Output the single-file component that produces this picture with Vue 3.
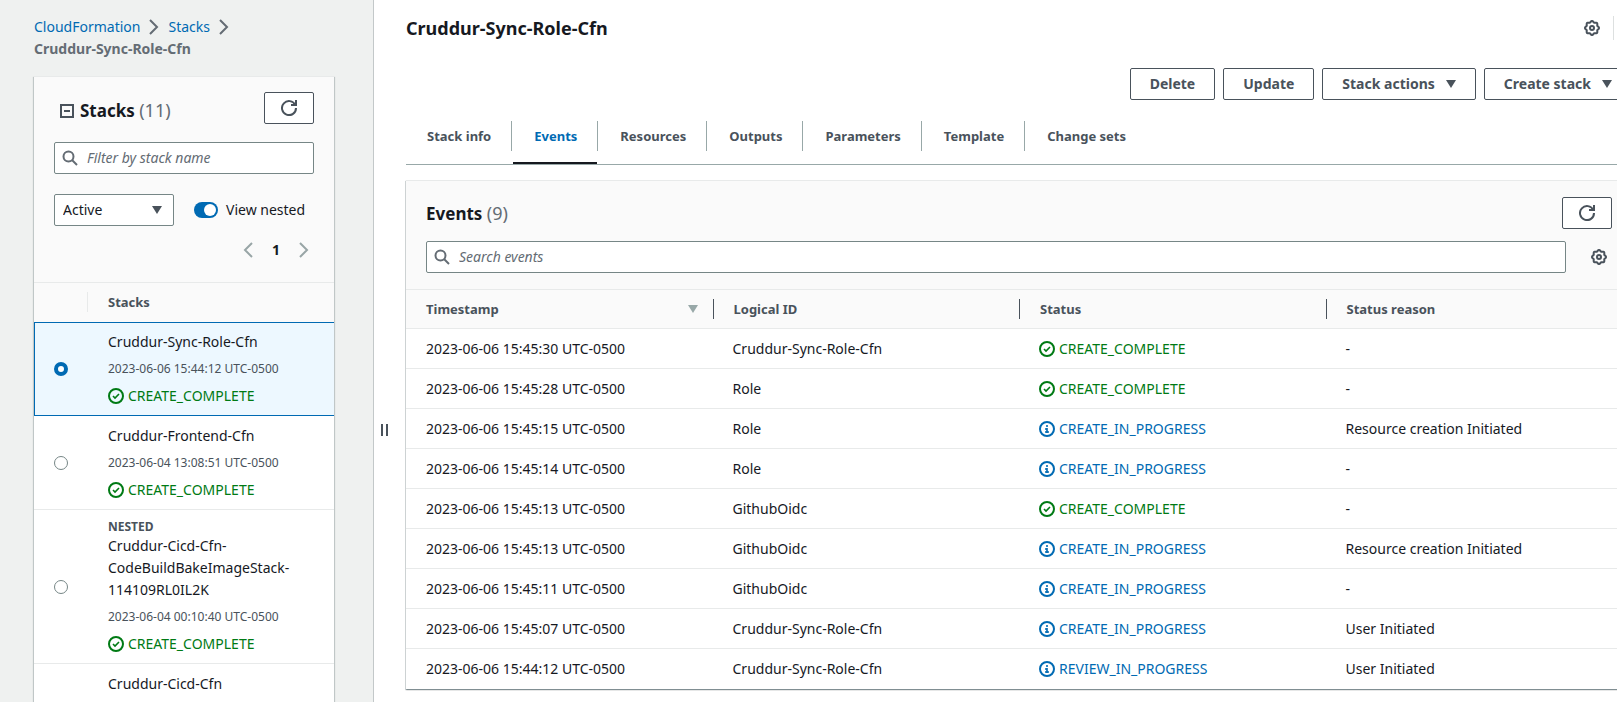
<script setup>
import { ref } from 'vue'

const tabs = ['Stack info', 'Events', 'Resources', 'Outputs', 'Parameters', 'Template', 'Change sets']
const activeTab = ref('Events')
const selected = ref(0)
const nestedOn = ref(true)

const stacks = [
  { name: ['Cruddur-Sync-Role-Cfn'], time: '2023-06-06 15:44:12 UTC-0500', status: 'CREATE_COMPLETE' },
  { name: ['Cruddur-Frontend-Cfn'], time: '2023-06-04 13:08:51 UTC-0500', status: 'CREATE_COMPLETE' },
  {
    nested: true,
    name: ['Cruddur-Cicd-Cfn-', 'CodeBuildBakeImageStack-', '114109RL0IL2K'],
    time: '2023-06-04 00:10:40 UTC-0500',
    status: 'CREATE_COMPLETE',
  },
  { name: ['Cruddur-Cicd-Cfn'] },
]

const events = [
  ['15:45:30', 'Cruddur-Sync-Role-Cfn', 'CREATE_COMPLETE', '-'],
  ['15:45:28', 'Role', 'CREATE_COMPLETE', '-'],
  ['15:45:15', 'Role', 'CREATE_IN_PROGRESS', 'Resource creation Initiated'],
  ['15:45:14', 'Role', 'CREATE_IN_PROGRESS', '-'],
  ['15:45:13', 'GithubOidc', 'CREATE_COMPLETE', '-'],
  ['15:45:13', 'GithubOidc', 'CREATE_IN_PROGRESS', 'Resource creation Initiated'],
  ['15:45:11', 'GithubOidc', 'CREATE_IN_PROGRESS', '-'],
  ['15:45:07', 'Cruddur-Sync-Role-Cfn', 'CREATE_IN_PROGRESS', 'User Initiated'],
  ['15:44:12', 'Cruddur-Sync-Role-Cfn', 'REVIEW_IN_PROGRESS', 'User Initiated'],
].map(([time, id, status, reason]) => ({ time: `2023-06-06 ${time} UTC-0500`, id, status, reason }))

const done = (status) => status.endsWith('COMPLETE')

// Eight-lobed outline of the settings cog.
const cog =
  'M' +
  Array.from({ length: 64 }, (_, i) => {
    const a = (i / 64) * Math.PI * 2
    const r = 6.4 + 0.65 * Math.cos(8 * a)
    return `${(8 + r * Math.cos(a)).toFixed(2)} ${(8 + r * Math.sin(a)).toFixed(2)}`
  }).join('L') +
  'Z'
</script>

<template>
  <div class="app">
    <aside class="side">
      <nav class="crumbs" aria-label="Breadcrumbs">
        <a href="#">CloudFormation</a>
        <svg class="icon" viewBox="0 0 16 16"><path d="M4 1l7 7-7 7" /></svg>
        <a href="#">Stacks</a>
        <svg class="icon" viewBox="0 0 16 16"><path d="M4 1l7 7-7 7" /></svg>
        <span class="current">Cruddur-Sync-Role-Cfn</span>
      </nav>

      <section class="panel">
        <div class="stack-head">
          <div class="title-row">
            <h2>
              <svg class="collapse" viewBox="0 0 14 14"><path d="M1 1h12v12H1zM4 7h6" /></svg>
              <span>Stacks <span class="count">(11)</span></span>
            </h2>
            <button class="btn refresh" aria-label="Refresh stacks">
              <svg class="icon" viewBox="0 0 16 16"><path d="M10 5h5V0M15 8a7 7 0 1 1-.7-3" /></svg>
            </button>
          </div>
          <label class="search">
            <svg class="icon" viewBox="0 0 16 16"><circle cx="6.5" cy="6.5" r="5" /><path d="M10 10l5 5" /></svg>
            <input type="text" placeholder="Filter by stack name" aria-label="Filter by stack name" />
          </label>
          <div class="filters">
            <div class="select">
              <select aria-label="Stack status"><option>Active</option></select>
              <svg class="caret" viewBox="0 0 10 8"><path d="M0 0h10L5 8z" /></svg>
            </div>
            <label class="switch">
              <input v-model="nestedOn" type="checkbox" role="switch" />
              <span>View nested</span>
            </label>
          </div>
          <div class="pages">
            <button aria-label="Previous page"><svg class="icon" viewBox="0 0 16 16"><path d="M12 1L5 8l7 7" /></svg></button>
            <span>1</span>
            <button aria-label="Next page"><svg class="icon" viewBox="0 0 16 16"><path d="M4 1l7 7-7 7" /></svg></button>
          </div>
        </div>

        <table class="stacks">
          <thead>
            <tr>
              <th class="pick"><div class="sep"></div></th>
              <th>Stacks</th>
            </tr>
          </thead>
          <tbody>
            <tr v-for="(s, i) in stacks" :key="i" :class="{ on: selected === i }">
              <td class="pick">
                <input v-model="selected" type="radio" name="stack" :value="i" :aria-label="s.name.join('')" />
              </td>
              <td class="info">
                <div v-if="s.nested" class="nested">NESTED</div>
                <div v-for="line in s.name" :key="line">{{ line }}</div>
                <div v-if="s.time" class="time">{{ s.time }}</div>
                <div v-if="s.status" class="status ok">
                  <svg class="icon" viewBox="0 0 16 16"><circle cx="8" cy="8" r="7" /><path d="M5 8l2 2 4-4" /></svg>
                  <span>{{ s.status }}</span>
                </div>
              </td>
            </tr>
          </tbody>
        </table>
      </section>
    </aside>

    <div class="splitter">
      <svg viewBox="0 0 8 12" aria-label="Resize panels"><path d="M1 0v12M6 0v12" /></svg>
    </div>

    <main class="main">
      <div class="content">
        <header class="top">
          <h1>Cruddur-Sync-Role-Cfn</h1>
          <button class="cog" aria-label="Preferences">
            <svg class="icon" viewBox="0 0 16 16"><path :d="cog" /><circle cx="8" cy="8" r="2" /></svg>
          </button>
          <span class="rule"></span>
        </header>

        <div class="actions">
          <button class="btn">Delete</button>
          <button class="btn">Update</button>
          <button class="btn">Stack actions <svg class="caret" viewBox="0 0 10 8"><path d="M0 0h10L5 8z" /></svg></button>
          <button class="btn">Create stack <svg class="caret" viewBox="0 0 10 8"><path d="M0 0h10L5 8z" /></svg></button>
        </div>

        <ul class="tabs" role="tablist">
          <li v-for="t in tabs" :key="t" role="presentation">
            <button role="tab" :aria-selected="activeTab === t" :class="{ active: activeTab === t }" @click="activeTab = t">{{ t }}</button>
          </li>
        </ul>

        <section class="panel events">
          <div class="event-head">
            <div class="title-row">
              <h2>Events <span class="count">(9)</span></h2>
              <button class="btn refresh" aria-label="Refresh events">
                <svg class="icon" viewBox="0 0 16 16"><path d="M10 5h5V0M15 8a7 7 0 1 1-.7-3" /></svg>
              </button>
            </div>
            <div class="search-row">
              <label class="search">
                <svg class="icon" viewBox="0 0 16 16"><circle cx="6.5" cy="6.5" r="5" /><path d="M10 10l5 5" /></svg>
                <input type="text" placeholder="Search events" aria-label="Search events" />
              </label>
              <button class="cog" aria-label="Table preferences">
                <svg class="icon" viewBox="0 0 16 16"><path :d="cog" /><circle cx="8" cy="8" r="2" /></svg>
              </button>
            </div>
          </div>

          <table class="grid">
            <thead>
              <tr>
                <th>
                  <div class="sort">Timestamp <svg class="caret" viewBox="0 0 10 8"><path d="M0 0h10L5 8z" /></svg></div>
                </th>
                <th><div class="sep">Logical ID</div></th>
                <th><div class="sep">Status</div></th>
                <th><div class="sep">Status reason</div></th>
              </tr>
            </thead>
            <tbody>
              <tr v-for="(e, i) in events" :key="i">
                <td>{{ e.time }}</td>
                <td>{{ e.id }}</td>
                <td>
                  <div class="status" :class="done(e.status) ? 'ok' : 'busy'">
                    <svg v-if="done(e.status)" class="icon" viewBox="0 0 16 16"><circle cx="8" cy="8" r="7" /><path d="M5 8l2 2 4-4" /></svg>
                    <svg v-else class="icon" viewBox="0 0 16 16"><circle cx="8" cy="8" r="7" /><path d="M8 4v2M6 8h2M8 7v5M6 11h4" /></svg>
                    <span>{{ e.status }}</span>
                  </div>
                </td>
                <td>{{ e.reason }}</td>
              </tr>
            </tbody>
          </table>
        </section>
      </div>
    </main>
  </div>
</template>

<style>
body {
  margin: 0;
}
</style>

<style scoped>
.app {
  --ink: #16191f;
  --slate: #49525b;
  --grey: #646c74;
  --blue: #006ab3;
  --line: #e8eaea;
  display: flex;
  height: 100vh;
  overflow: hidden;
  background: #fff;
  color: var(--ink);
  font: 14px/22px "Noto Sans", "Open Sans", sans-serif;
}
* {
  box-sizing: border-box;
}
button,
input,
select {
  margin: 0;
  padding: 0;
  border: 0;
  background: none;
  color: inherit;
  font: inherit;
}
a {
  color: var(--blue);
  text-decoration: none;
}
h1,
h2 {
  margin: 0;
  font-size: 18px;
  line-height: 24px;
  font-weight: 700;
}
h2 {
  font-size: 17px;
}
.count {
  color: var(--grey);
  font-size: 18px;
  font-weight: 400;
}
.icon {
  display: block;
  flex: none;
  width: 16px;
  height: 16px;
  fill: none;
  stroke: currentColor;
  stroke-width: 2;
}
.status .icon path {
  stroke-width: 1.6;
}
.caret {
  flex: none;
  width: 10px;
  height: 8px;
  fill: currentColor;
}

.side {
  flex: none;
  width: 374px;
  padding: 16px 39px 0 34px;
  overflow: hidden;
  border-right: 1px solid #c3c8c9;
  background: #eff1f0;
}
.crumbs {
  display: flex;
  flex-wrap: wrap;
  align-items: center;
  column-gap: 6px;
  margin-bottom: 16px;
  color: var(--grey);
}
.current {
  flex-basis: 100%;
  font-weight: 700;
}
.panel {
  border-top: 1px solid var(--line);
  background: #fff;
  box-shadow: 0 1px 1px 0 rgba(0, 28, 36, 0.3), 1px 1px 1px 0 rgba(0, 28, 36, 0.15), -1px 1px 1px 0 rgba(0, 28, 36, 0.15);
}
.stack-head {
  padding: 15px 20px 20px;
  background: #fafafa;
}
.title-row {
  display: flex;
  align-items: center;
  justify-content: space-between;
}
.stack-head .title-row {
  align-items: flex-end;
  margin-bottom: 18px;
}
.stack-head h2 {
  display: flex;
  align-items: center;
  gap: 6px;
  padding-left: 6px;
  line-height: 26px;
}
.collapse {
  width: 14px;
  height: 14px;
  fill: none;
  stroke: var(--slate);
  stroke-width: 2;
}
.btn {
  display: flex;
  align-items: center;
  gap: 11px;
  height: 32px;
  padding: 0 19px;
  border: 1px solid var(--slate);
  border-radius: 2px;
  background: #fff;
  color: var(--slate);
  font-weight: 700;
}
.refresh {
  justify-content: center;
  width: 50px;
  padding: 0;
}
.search {
  display: flex;
  align-items: center;
  gap: 9px;
  height: 32px;
  padding: 0 7px;
  border: 1px solid #768686;
  border-radius: 2px;
  background: #fff;
  color: var(--grey);
}
.search input {
  flex: 1;
  min-width: 0;
  outline: 0;
  color: var(--ink);
}
.search input::placeholder {
  color: var(--grey);
  font-style: italic;
  opacity: 1;
}
.filters {
  display: flex;
  align-items: center;
  gap: 20px;
  margin-top: 20px;
}
.select {
  display: grid;
  align-items: center;
  width: 120px;
}
.select select,
.select .caret {
  grid-area: 1 / 1;
}
.select select {
  height: 32px;
  padding: 0 8px;
  appearance: none;
  border: 1px solid #768686;
  border-radius: 2px;
  background: #fff;
}
.select .caret {
  justify-self: end;
  margin-right: 12px;
  color: var(--slate);
  pointer-events: none;
}
.switch {
  display: flex;
  align-items: center;
  gap: 8px;
}
.switch input {
  display: flex;
  align-items: center;
  width: 24px;
  height: 16px;
  padding: 0 2px;
  appearance: none;
  border-radius: 8px;
  background: #768686;
}
.switch input::before {
  content: "";
  width: 12px;
  height: 12px;
  border-radius: 50%;
  background: #fff;
}
.switch input:checked {
  justify-content: flex-end;
  background: var(--blue);
}
.pages {
  display: flex;
  align-items: center;
  justify-content: flex-end;
  height: 24px;
  margin-top: 12px;
  padding-right: 2px;
  font-weight: 700;
}
.pages span {
  width: 40px;
  text-align: center;
}
.pages button {
  color: #98a5a6;
}

table {
  width: 100%;
  border-spacing: 0;
}
th {
  height: 40px;
  padding: 0;
  border: 1px solid var(--line);
  border-width: 1px 0;
  background: #fafafa;
  color: var(--slate);
  font-size: 13px;
  font-weight: 700;
  line-height: 20px;
  text-align: left;
}
td {
  padding: 0;
}
.stacks th {
  border-bottom-color: transparent;
}
.stacks th:last-child,
.info {
  padding-left: 20px;
}
.stacks .pick {
  width: 54px;
}
.pick .sep {
  height: 20px;
  border-right: 1px solid var(--line);
}
.stacks td {
  height: 94px;
  border-top: 1px solid transparent;
  border-bottom: 1px solid var(--line);
}
.stacks .info {
  padding-top: 8px;
  padding-bottom: 8px;
  vertical-align: top;
}
.stacks .on td {
  border-color: var(--blue);
  background: #edf8ff;
}
.stacks .on .pick {
  border-left: 1px solid var(--blue);
}
.stacks .on .pick input {
  margin-left: 19px;
}
.pick input {
  display: block;
  width: 14px;
  height: 14px;
  margin-left: 20px;
  appearance: none;
  border: 1px solid #768686;
  border-radius: 50%;
  background: #fff;
}
.pick input:checked {
  border: 4px solid var(--blue);
}
.nested {
  color: var(--slate);
  font-size: 12px;
  font-weight: 700;
  line-height: 16px;
}
.time {
  margin-top: 5px;
  color: var(--slate);
  font-size: 12px;
}
.status {
  display: flex;
  align-items: center;
  gap: 4px;
}
.info .status {
  margin-top: 5px;
}
.ok {
  color: #007a14;
}
.busy {
  color: var(--blue);
}

.splitter {
  flex: none;
  width: 32px;
  padding: 424px 0 0 7px;
}
.splitter svg {
  display: block;
  width: 8px;
  height: 12px;
  stroke: var(--slate);
  stroke-width: 2;
}

.main {
  flex: 1;
  min-width: 0;
  padding-left: 1px;
  margin-left: -1px;
  overflow: hidden;
}
.content {
  margin-right: -15px;
}
.top {
  display: flex;
  align-items: center;
  padding: 16px 18px 0 0;
}
.top h1 {
  flex: 1;
}
.cog {
  color: var(--slate);
}
.rule {
  height: 24px;
  margin-left: 13px;
  border-left: 1px solid #dde0e0;
}
.actions {
  display: flex;
  justify-content: flex-end;
  gap: 8px;
  margin-top: 28px;
}
.tabs {
  display: flex;
  margin: 8px 0 15px;
  padding: 0;
  border-bottom: 1px solid #98a8a8;
  list-style: none;
}
.tabs li {
  display: flex;
  align-items: center;
}
.tabs li + li::before {
  content: "";
  width: 1px;
  height: 30px;
  margin-right: 1px;
  background: #98a8a8;
}
.tabs button {
  height: 56px;
  padding: 0 20px 0 21px;
  border: 2px solid transparent;
  border-width: 2px 0;
  color: var(--slate);
  font-size: 13px;
  font-weight: 700;
}
.tabs .active {
  border-bottom-color: var(--ink);
  color: var(--blue);
}
.event-head {
  padding: 16px 20px;
  background: #fafafa;
}
.search-row {
  display: flex;
  align-items: center;
  gap: 25px;
  margin-top: 12px;
  padding-right: 5px;
}
.search-row .search {
  flex: 1;
}
.grid {
  table-layout: fixed;
}
.grid td {
  height: 40px;
  padding-left: 20px;
  border-bottom: 1px solid var(--line);
}
.grid tr:last-child td {
  border-bottom: 0;
}
.grid .sep {
  padding-left: 20px;
  border-left: 1px solid var(--slate);
}
.sort {
  display: flex;
  align-items: center;
  justify-content: space-between;
  padding: 0 15px 0 20px;
}
.sort .caret {
  color: #98a8a8;
}
</style>
